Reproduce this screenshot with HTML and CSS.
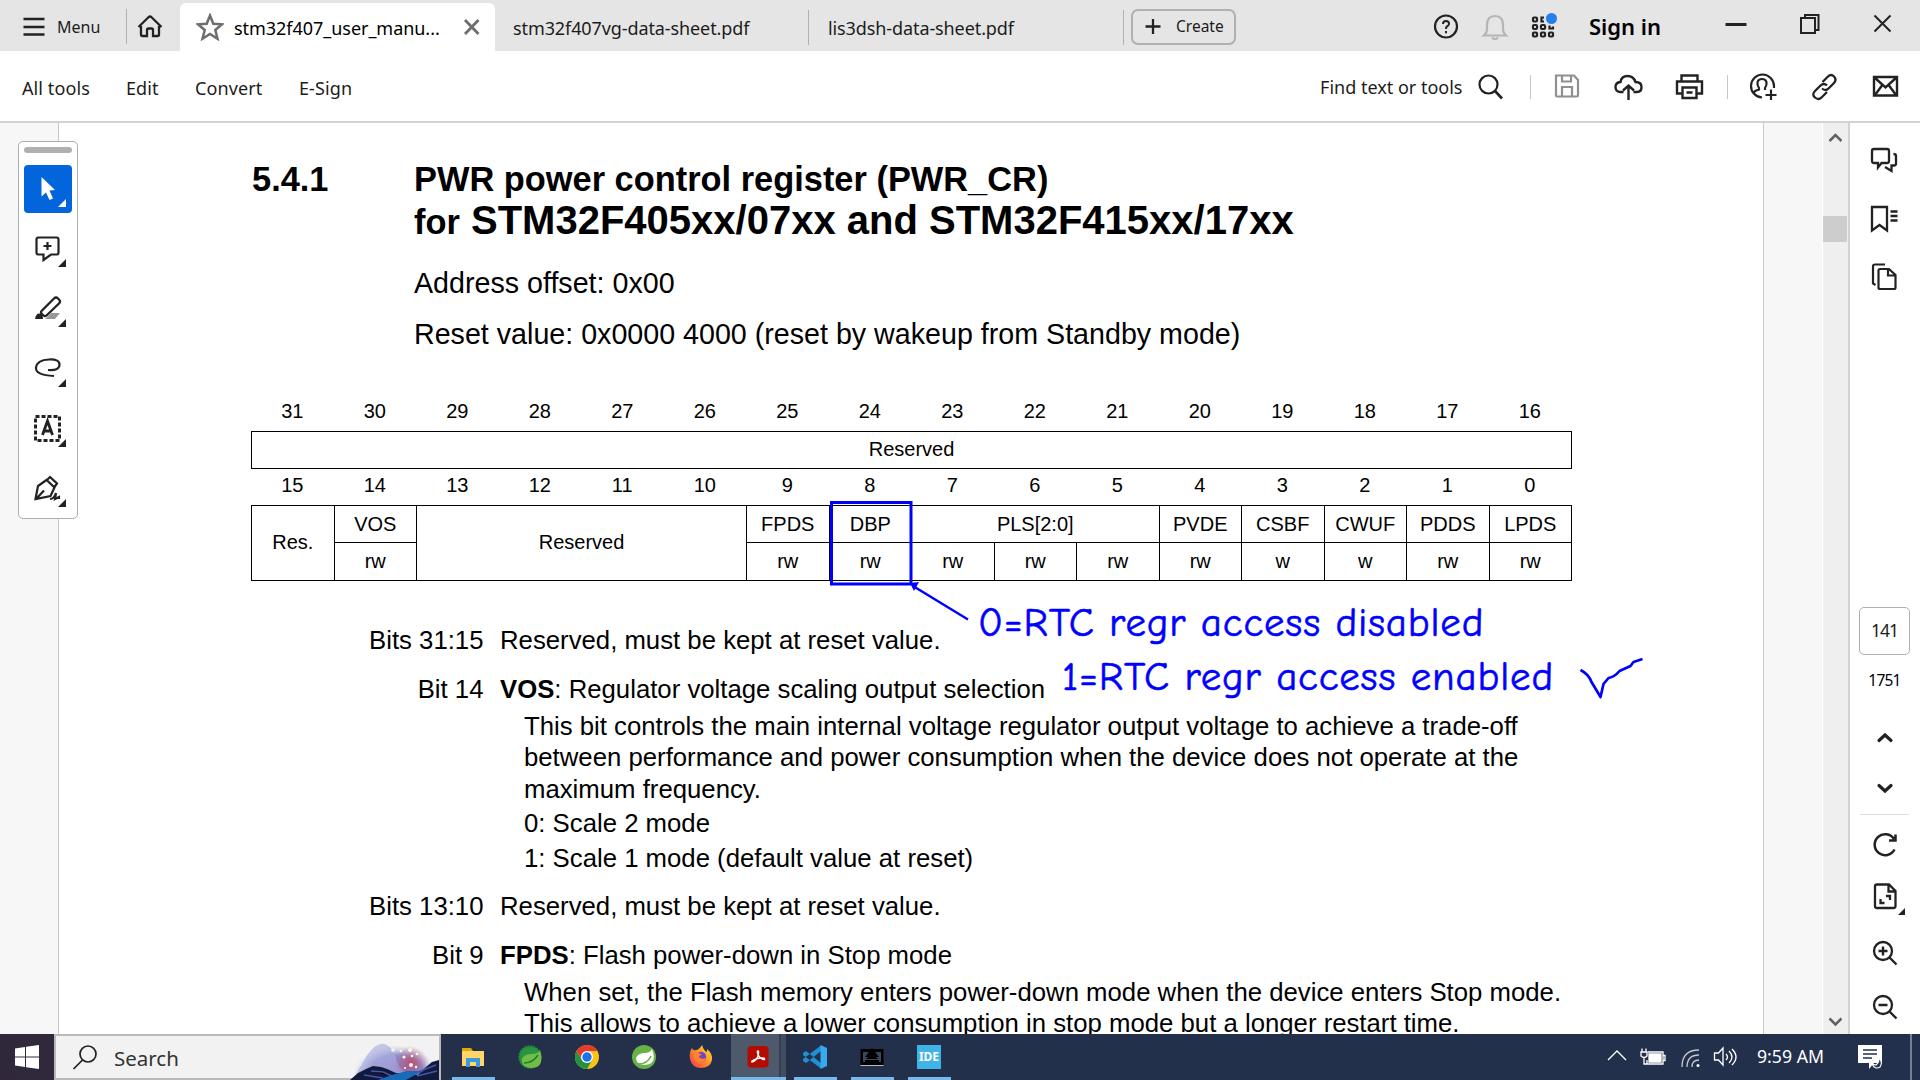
FILE: index.html
```html
<!DOCTYPE html>
<html lang="en">
<head>
<meta charset="utf-8">
<title>stm32f407_user_manual.pdf</title>
<link rel="stylesheet" href="styles.css">
</head>
<body>
<div class="screen">
  <header class="tabbar">
    <div class="menu">
      <svg width="24" height="20" viewBox="0 0 24 20" class="ico"><path d="M1.5 2h21M1.500 10h21M1.500 17.500h21" stroke-width="2.400"/></svg>
      <span>Menu</span>
    </div>
    <div class="home">
      <svg width="26" height="24" viewBox="0 0 26 24" class="ico"><path d="M4 11v8.500q0 1.500 1.500 1.500H10v-6q0-1.500 1.500-1.500h3q1.500 0 1.500 1.500V21h4.500q1.500 0 1.500-1.500V11M1.500 12 11.700 2q1.300-1 2.600 0L24.500 12" stroke-width="2.300"/></svg>
    </div>
    <div class="tab active">
      <svg width="28" height="28" viewBox="0 0 28 28" class="ico gray"><path d="m14 2.500 3.300 8.200 8.700.600-6.700 5.700 2.200 8.700-7.500-4.800-7.500 4.800 2.200-8.700L2 11.300l8.700-.6z" stroke-width="2.500"/></svg>
      <span class="name">stm32f407_user_manu...</span>
      <svg width="18" height="18" viewBox="0 0 18 18" class="ico gray close"><path d="m2 1 13.500 14M15.500 1 2 15" stroke-width="2.800"/></svg>
    </div>
    <div class="tab"><span>stm32f407vg-data-sheet.pdf</span></div>
    <div class="tab last"><span>lis3dsh-data-sheet.pdf</span></div>
    <div class="create">
      <svg width="16" height="16" viewBox="0 0 16 16" class="ico"><path d="M8 0v15M.5 7.500h15" stroke-width="2.300"/></svg>
      <span>Create</span>
    </div>
    <div class="account">
      <svg width="28" height="28" viewBox="0 0 28 28" class="ico"><circle cx="14" cy="13.500" r="11" stroke-width="2.200"/><path d="M11 11q0-3 3-3t3 2.700q0 1.500-1.600 2.500T14 16M14 18v2.200"/></svg>
      <svg width="28" height="28" viewBox="0 0 28 28" class="ico light"><path d="M3 22.500q3-2.500 3-6.500v-4q0-9 8-9t8 9v4q0 4 3 6.500zM11 24.500q3 3.500 6 0" stroke-width="2.200"/></svg>
      <svg width="28" height="28" viewBox="0 0 28 28" class="ico"><g stroke-width="2.200"><rect x="3" y="4.500" width="4" height="4" rx="1"/><path d="M14 4.500h-2.500v4H14"/><rect x="3" y="12" width="4" height="4" rx="1"/><rect x="11" y="12" width="4" height="4" rx="1"/><path d="M19.500 12.500v3H23v-2"/><rect x="3" y="19.500" width="4" height="4" rx="1"/><rect x="11" y="19.500" width="4" height="4" rx="1"/><rect x="19" y="19.500" width="4" height="4" rx="1"/></g><circle cx="21.500" cy="5.500" r="5.500" fill="#2680eb" stroke="none"/></svg>
      <span>Sign in</span>
    </div>
    <div class="window-controls">
      <svg width="22" height="22" viewBox="0 0 22 22" class="ico"><path d="M.5 11.500h21" stroke-width="3"/></svg>
      <svg width="20" height="22" viewBox="0 0 20 22" class="ico"><rect x="1" y="5" width="14" height="15"/><path d="M5 5V2h13.500v15H15"/></svg>
      <svg width="20" height="22" viewBox="0 0 20 22" class="ico"><path d="m1.500 2.500 16 16M17.500 2.500l-16 16"/></svg>
    </div>
  </header>

  <nav class="toolbar">
    <div class="links"><span class="l1">All tools</span><span class="l2">Edit</span><span class="l3">Convert</span><span class="l4">E-Sign</span></div>
    <div class="actions">
      <span class="find">Find text or tools</span>
      <svg width="30" height="30" viewBox="0 0 30 30" class="ico"><circle cx="13.500" cy="12.500" r="9" stroke-width="2.200"/><path d="m20 19 7 7.500" stroke-width="2.600"/></svg>
      <i class="sep"></i>
      <svg width="30" height="30" viewBox="0 0 30 30" class="ico mute"><path d="M4 3.500h18l4 4.500v15.500q0 1-1 1H5q-1 0-1-1zM10 3.500v6h9v-6M10 24v-9h10v9" stroke-width="2.200"/></svg>
      <svg width="30" height="30" viewBox="0 0 30 30" class="ico"><path d="M10.500 20H7Q2.500 19.500 2.500 15t5-5q1-6 7-6t8 6q6 0 6 5t-4.500 5H20.500M15.500 28V14m-5.500 4.500 5.500-5 5.500 5" stroke-width="2.400"/></svg>
      <svg width="30" height="30" viewBox="0 0 30 30" class="ico"><path d="M7.500 9V3.500h16V9M7.500 21.500H3V9.500h25v12H23.500M8.500 15.500h14v10.500H8.500zM12.500 20.500h6" stroke-width="2.400"/></svg>
      <i class="sep sep2"></i>
      <svg width="30" height="30" viewBox="0 0 30 30" class="ico"><path d="M13 25.500A11.500 11.500 0 1 1 25 14v2M4.500 21q1-2.500 5.500-3.500v-1.500Q8 13 8.500 10q1-3 4.500-3t4.500 3Q18 13 16 16v2M22 17.500V28M16.500 23h11" stroke-width="2.200"/></svg>
      <svg width="30" height="30" viewBox="0 0 30 30" class="ico"><path d="m12.500 10 5.500-5.500q3-3 6 0t0 6.500L18.500 16.500q-3 3-6.500 0M17 20l-5.500 5.500q-3 3-6.500 0t0-6.500L10.500 13.500q3.500-3 6.500 0" stroke-width="2.300"/></svg>
      <svg width="30" height="30" viewBox="0 0 30 30" class="ico"><path d="M3 5h23v18.500H3zM3.500 5.500l11 10 11-10M4 23l7-9.500M25 23l-7-9.500" stroke-width="2.400"/></svg>
    </div>
  </nav>

  <main class="workspace">
    <div class="gutter"></div>
    <article class="page">
      <section class="heading">
        <span class="number">5.4.1</span>
        <div class="title">
          <h1>PWR power control register (PWR_CR)</h1>
          <h2><small>for</small> STM32F405xx/07xx and STM32F415xx/17xx</h2>
          <p class="address">Address offset: 0x00</p>
          <p class="reset">Reset value: 0x0000 4000 (reset by wakeup from Standby mode)</p>
        </div>
      </section>

      <section class="register">
        <div class="bits"><b>31</b><b>30</b><b>29</b><b>28</b><b>27</b><b>26</b><b>25</b><b>24</b><b>23</b><b>22</b><b>21</b><b>20</b><b>19</b><b>18</b><b>17</b><b>16</b></div>
        <div class="high">Reserved</div>
        <div class="bits"><b>15</b><b>14</b><b>13</b><b>12</b><b>11</b><b>10</b><b>9</b><b>8</b><b>7</b><b>6</b><b>5</b><b>4</b><b>3</b><b>2</b><b>1</b><b>0</b></div>
        <div class="fields">
          <div class="tall">Res.</div><div>VOS</div><div class="tall wide4">Reserved</div><div>FPDS</div><div>DBP</div><div class="wide3">PLS[2:0]</div><div>PVDE</div><div>CSBF</div><div>CWUF</div><div>PDDS</div><div>LPDS</div>
          <div>rw</div><div>rw</div><div>rw</div><div>rw</div><div>rw</div><div>rw</div><div>rw</div><div>w</div><div>w</div><div>rw</div><div>rw</div>
        </div>
      </section>

      <section class="description">
        <div class="entry"><span class="label">Bits 31:15</span><p>Reserved, must be kept at reset value.</p></div>
        <div class="entry e14"><span class="label">Bit 14</span>
          <div><p><b>VOS</b>: Regulator voltage scaling output selection</p>
            <div class="details"><p>This bit controls the main internal voltage regulator output voltage to achieve a trade-off<br>between performance and power consumption when the device does not operate at the<br>maximum frequency.</p><p class="scale2">0: Scale 2 mode</p><p class="scale1">1: Scale 1 mode (default value at reset)</p></div>
          </div>
        </div>
        <div class="entry e13"><span class="label">Bits 13:10</span><p>Reserved, must be kept at reset value.</p></div>
        <div class="entry e9"><span class="label">Bit 9</span>
          <div><p><b>FPDS</b>: Flash power-down in Stop mode</p>
            <div class="details"><p>When set, the Flash memory enters power-down mode when the device enters Stop mode.<br>This allows to achieve a lower consumption in stop mode but a longer restart time.</p></div>
          </div>
        </div>
      </section>

      <div class="note note0">0=RTC regr access disabled</div>
      <div class="note note1">1=RTC regr access enabled</div>
      <svg class="ink" width="840" height="220" viewBox="820 490 840 220"><g fill="none" stroke="#00f"><rect x="831.500" y="502.500" width="79.500" height="81.500" stroke-width="3"/><path d="m913 586 55 33.500" stroke-width="2.500"/><path d="M1580.500 670q8 4 11 12l9 15 3-13 5-6q6-1 11-7l11-5 3-4 9-3" stroke-width="2.700" stroke-linejoin="round"/></g><path d="m910 583 9-1-5 9z" fill="#00f"/></svg>
    </article>
    <div class="gutter right"></div>

    <div class="scrollbar">
      <svg width="14" height="12" viewBox="0 0 14 12"><path d="m1.500 9 6-6 6 6" fill="none" stroke="#606060" stroke-width="2.500"/></svg>
      <div class="thumb"></div>
      <svg class="down" width="14" height="12" viewBox="0 0 14 12"><path d="m1.500 2.500 6 6 6-6" fill="none" stroke="#606060" stroke-width="2.500"/></svg>
    </div>

    <aside class="rail">
      <svg width="30" height="30" viewBox="0 0 30 30" class="ico"><path d="M4 4h13q2 0 2 2v10q0 2-2 2h-5.500L8 22.500V18H4q-2 0-2-2V6q0-2 2-2zM23.500 9q2.500 0 2.500 2v7.500q0 2-2 2h-2.500V26L15 22" stroke-width="2.300"/></svg>
      <svg width="30" height="30" viewBox="0 0 30 30" class="ico"><path d="M2 4h15v23.500L9.500 22 2 27.500zM20.500 8.500h7M20.500 13h7M20.500 17.500h7" stroke-width="2.300"/></svg>
      <svg width="30" height="30" viewBox="0 0 30 30" class="ico"><path d="M15 3.500H5q-2 0-2 2v17l2.500 1.500M10 8h9l6.500 6v12.500q0 1.500-1.500 1.500H10q-1.500 0-1.500-1.500V9.500Q8.500 8 10 8zM18 8v6.500h7" stroke-width="2.200"/></svg>
      <div class="pageno">141</div>
      <div class="total">1751</div>
      <svg width="30" height="30" viewBox="0 0 30 30" class="ico up"><path d="m9 18.500 6-5.500 6 5.500" stroke-width="3.200" stroke-linecap="round"/></svg>
      <svg width="30" height="30" viewBox="0 0 30 30" class="ico dn"><path d="m9 12.500 6 5.500 6-5.500" stroke-width="3.200" stroke-linecap="round"/></svg>
      <hr>
      <svg width="30" height="30" viewBox="0 0 30 30" class="ico"><path d="M24.500 19.500A10.500 10.500 0 1 1 24 9M25.500 4.500v6h-6.500" stroke-width="2.500"/></svg>
      <svg width="40" height="34" viewBox="-5 0 40 34" class="ico pagefit"><path d="M7 3.500h12L25.500 10v15q0 2-2 2H7q-2 0-2-2v-19.500q0-2 2-2zM18.500 4v6.500H25M16 15h4v4M10.500 18v4h4" stroke-width="2.300"/><path d="M35 27v7h-7z" fill="#222" stroke="none"/></svg>
      <svg width="30" height="30" viewBox="0 0 30 30" class="ico zin"><circle cx="13" cy="12" r="9" stroke-width="2.300"/><path d="m19.500 18.500 7 7M13 7.500v9M8.500 12h9" stroke-width="2.400"/></svg>
      <svg width="30" height="30" viewBox="0 0 30 30" class="ico zout"><circle cx="13" cy="12" r="9" stroke-width="2.300"/><path d="m19.500 18.500 7 7M8.500 12h9" stroke-width="2.400"/></svg>
    </aside>

    <div class="tools">
      <i class="handle"></i>
      <div class="tool on"><svg width="48" height="48" viewBox="0 0 48 48"><path d="M17.500 12v19.500l4.500-4L25.500 35l3.500-1.500-3.500-8 5.500-.5z" fill="#fff"/><path d="M42 34v8h-8z" fill="#fff"/></svg></div>
      <div class="tool"><svg width="48" height="48" viewBox="0 0 48 48" class="ico"><path d="M14.500 12.500h18q2 0 2 2v13q0 2-2 2h-5.500L19.500 35v-5.500h-5q-2 0-2-2v-13q0-2 2-2zM23.500 17v8M19.500 21h8" stroke-width="2.200"/><path d="M42 34v8h-8z" fill="#222" stroke="none"/></svg></div>
      <div class="tool"><svg width="48" height="48" viewBox="0 0 48 48" class="ico"><path d="m18 25.500 12-12q2-2 4 0l1 1q2 2 0 4L23 30q-2 2-3.500.500l-1.500-1.500q-2-1.500 0-3.500z" stroke-width="2.300"/><path d="M15 28.500q4 0 4 5.500h-8q1-5.500 4-5.500z" fill="#222" stroke="none"/><path d="M27 28h9l-5 6H21z" fill="#999" stroke="none"/><path d="M42 34v8h-8z" fill="#222" stroke="none"/></svg></div>
      <div class="tool"><svg width="48" height="48" viewBox="0 0 48 48" class="ico"><path d="M24 25q11 1 11.500-5T25 14.500Q13 15 12 22.500T30 31" stroke-width="2.200"/><path d="M42 34v8h-8z" fill="#222" stroke="none"/></svg></div>
      <div class="tool"><svg width="48" height="48" viewBox="0 0 48 48" class="ico"><rect x="11.500" y="11.500" width="24" height="24" stroke-width="3" stroke-dasharray="4 2"/><path d="m18.500 30 5-14 5 14M20 26h7.500" stroke-width="2.800"/><path d="M42 34v8h-8z" fill="#222" stroke="none"/></svg></div>
      <div class="tool"><svg width="48" height="48" viewBox="0 0 48 48" class="ico"><path d="m11.500 34 2.500-13 8.500-6 8 7.500L26.500 31zM23.500 14.500l2.500-2.500 7 6.500-2.500 3.500M13 33l7-7.500M26 34q4 0 6-6l-1 6 4-2v2" stroke-width="2.200"/><path d="M42 34v8h-8z" fill="#222" stroke="none"/></svg></div>
    </div>
  </main>

  <footer class="taskbar">
    <svg class="start" width="24" height="24" viewBox="0 0 24 24"><path d="M0 3.500 10 2v9.500H0zM11 1.800 24 0v11.500H11zM0 12.500h10V22L0 20.500zM11 12.500h13V24l-13-1.800z" fill="#fff"/></svg>
    <div class="search">
      <svg width="26" height="26" viewBox="0 0 26 26" class="ico"><circle cx="16" cy="9" r="8"/><path d="M10.500 15 1.500 24"/></svg>
      <span>Search</span>
      <svg class="art" width="89" height="44" viewBox="0 0 89 44">
        <defs><radialGradient id="sky" cx=".5" cy=".65" r=".5"><stop offset="0" stop-color="#7564b3"/><stop offset=".7" stop-color="#9295cf"/><stop offset="1" stop-color="#c9cbe8" stop-opacity="0"/></radialGradient><radialGradient id="glow"><stop offset="0" stop-color="#bd4f6c"/><stop offset="1" stop-color="#a65b91" stop-opacity="0"/></radialGradient></defs>
        <ellipse cx="46" cy="32" rx="43" ry="33" fill="url(#sky)"/><path d="M18 18Q34-3 45 19q3 15 14 19H6z" fill="#aaaee0" opacity=".65"/><circle cx="61" cy="27" r="17" fill="url(#glow)"/>
        <path d="M0 44 8 37l8-4 7-3 8 1 6 2 9 4 22 2 8-8 6-5 7-2v22z" fill="#111a3d"/><path d="m28 44 14-5 15-4 17 0-9 4-9 5z" fill="#176cb5"/><path d="m21 35 12 1 9 4M68 36l18-7M67 40l20-5M14 39l19 3" stroke="#4556a8" stroke-width="1.500"/>
        <g fill="#fff5df"><circle cx="45" cy="5" r="1"/><circle cx="51" cy="9" r="1.300"/><circle cx="43" cy="14" r="1.800"/><circle cx="51" cy="15" r="1.300"/><circle cx="60" cy="14" r="2"/><circle cx="67" cy="18" r="1.300"/><circle cx="54" cy="21" r="1.600"/><circle cx="62" cy="20" r="1.300"/><circle cx="61" cy="29" r="2"/><circle cx="66" cy="31" r="1.200"/><circle cx="55" cy="32" r="1"/></g>
      </svg>
    </div>
    <div class="apps">
      <div class="app open"><svg width="24" height="24" viewBox="0 0 24 24"><path d="M1 3h9l2 3h11v15H1z" fill="#e5a50a"/><path d="M1 6h22v15H1z" fill="#ffd667"/><path d="M5 13h14v9h-4v-5H9v5H5z" fill="#3a99e0"/></svg></div>
      <div class="app"><svg width="24" height="24" viewBox="0 0 24 24"><ellipse cx="12" cy="12" rx="10.800" ry="10.800" fill="#2b9444" stroke="#24863b" stroke-width="2" stroke-dasharray="2 1"/><path d="M22 5q5 18-8 18Q3 23 4 14q2-5 10-5 6 0 8-4z" fill="#71bd45"/><path d="M6 18q9 0 14-8" stroke="#237b39" stroke-width="1.500" fill="none"/></svg></div>
      <div class="app"><svg width="24" height="24" viewBox="0 0 24 24"><circle cx="12" cy="12" r="12" fill="#fbc116"/><path d="M1.600 6A12 12 0 0 1 22.400 6H12L7 15z" fill="#e33b2e"/><path d="M1.600 6A12 12 0 0 0 12 24l5.200-9-5.200 3-5.200-3z" fill="#229342"/><circle cx="12" cy="12" r="6" fill="#fff"/><circle cx="12" cy="12" r="4.700" fill="#1a73e8"/></svg></div>
      <div class="app"><svg width="24" height="24" viewBox="0 0 24 24"><circle cx="12" cy="12" r="12" fill="#68b144"/><path d="M20 4q6 15-7 16-9 0-9-7 2-5 9-5 5 0 7-4z" fill="#fff"/><path d="M4 19q11 1 15-8" stroke="#68b144" stroke-width="1.500" fill="none"/></svg></div>
      <div class="app"><svg width="24" height="24" viewBox="0 0 24 24"><defs><linearGradient id="fox" x1="1" y1="0" x2="0" y2="1"><stop stop-color="#ffe548"/><stop offset=".45" stop-color="#ff9828"/><stop offset="1" stop-color="#ed3152"/></linearGradient></defs><path d="M3 3q1 3 4 2 3 0 6-5 2 6 5 7V4q6 5 5 11-2 8-11 8T1 14Q0 7 3 3z" fill="url(#fox)"/><circle cx="12" cy="12" r="5.200" fill="#7542c8"/><path d="M4 9q5-3 9 1-3 0-3 2 2 3 7 1-2 6-8 4-5-2-5-8z" fill="#ff822d"/></svg></div>
      <div class="app current"><svg width="24" height="24" viewBox="0 0 24 24"><rect x="1.500" y="1" width="21" height="21.500" rx="3.500" fill="#b30b00"/><path d="M6 17q5-1 6.500-8 .5-4-1-3-1 2 2 6 3 3 5 2.500 1-2-4-1.500-5 .5-8 2.500-1.500 1.500-.5 1.500z" fill="none" stroke="#fff" stroke-width="1.300"/></svg></div>
      <div class="app open"><svg width="24" height="24" viewBox="0 0 24 24"><path d="M0 8l3-2 15 12v5.500L0 10zM0 16l3 2L18 6V.5L0 14z" fill="#1f8fd6"/><path d="m17.500 0 6.500 3v18l-6.500 3z" fill="#35acef"/></svg></div>
      <div class="app open"><svg width="24" height="24" viewBox="0 0 24 24"><path d="M.5 4h23v16H.5z" fill="#000"/><path d="M3 7h18v10H3z" fill="#3b475c"/><path d="m12 3 7 9h-3l2 2H6l2-2H5zM5 15h14v2H5z" fill="#000"/><path d="M.5 20.500h23" stroke="#bbb"/></svg></div>
      <div class="app open"><div class="ide">IDE</div></div>
    </div>
    <div class="tray">
      <svg width="20" height="20" viewBox="0 0 20 20" class="wico"><path d="m1 15 9-9 9 9"/></svg>
      <svg width="26" height="24" viewBox="0 0 26 24" class="wico battery"><path d="M8 7h15v12H7v-4M23.500 10.500H25v5h-1.500M2 3.500V7M6 3.500V7M1 7h6v4q-3 3-6 0zM4 12v7h3"/><path d="M9 9h12v8H9z" fill="#fff"/></svg>
      <svg width="22" height="22" viewBox="0 0 22 22" class="wico wifi"><path d="M2 20Q2 3 19 3M7 20Q7 8 19 8M12 20q0-7 7-7" stroke="#c5c9d1"/><circle cx="18" cy="18.500" r="1.500" fill="#fff" stroke="none"/></svg>
      <svg width="24" height="22" viewBox="0 0 24 22" class="wico sound"><path d="M1.500 7h4L10 2v17l-4.500-5h-4zM13 8q3 3 0 6M16 5q6 6 0 12M19 3q8 8 0 16"/></svg>
      <span>9:59 AM</span>
      <svg width="25" height="25" viewBox="0 0 25 25" class="action"><path d="M0 0h24v18h-8l-5 6v-6H0z" fill="#fff"/><path d="M5 5h14M5 9h14M5 13h9" stroke="#22304a" stroke-width="1.500"/><path d="M19 12q4 4-1 8l-4-1q3 6 8 3 4-6-3-10z" fill="#22304a" stroke="#fff" stroke-width="1.200"/></svg>
    </div>
  </footer>
</div>
</body>
</html>
```
FILE: styles.css
```css
* { box-sizing: border-box; }
body { margin: 0; background: #fff; color: #1c1c1c; font-family: "Noto Sans", "Open Sans", sans-serif; }
p, h1, h2 { margin: 0; }
svg { display: block; flex: none; }
.screen { width: 1920px; height: 1080px; display: flex; flex-direction: column; overflow: hidden; }
.ico { fill: none; stroke: #222; stroke-width: 2; }
.ico.gray { stroke: #6e6e6e; }
.ico.light { stroke: #b5b5b5; }
.ico.mute { stroke: #909090; }
span, .note { white-space: nowrap; }

/* Tab strip */
.tabbar { height: 51px; flex: none; display: flex; align-items: flex-start; background: #e5e5e5; font-size: 18px; line-height: 24px; }
.menu { width: 127px; height: 35px; margin-top: 9px; padding-left: 22px; display: flex; align-items: center; gap: 11px; border-right: 1px solid #b1b1b1; font-size: 16px; }
.home { width: 53px; padding: 15px 0 0 10px; }
.tab { width: 315px; height: 35px; margin-top: 10px; padding: 6px 0 0 18px; border-right: 1px solid #b1b1b1; }
.tab span { letter-spacing: -.1px; }
.tab:nth-child(4) { width: 314px; }
.tab.last { width: 315px; padding-left: 19px; }
.tab.active { display: flex; height: 48px; margin-top: 3px; padding: 10px 0 0 16px; background: #fff; border: 0; border-radius: 6px 6px 0 0; color: #000; }
.tab.active .name { margin: 3px 0 0 10px; width: 229px; letter-spacing: -.04px; }
.tab.active .close { margin-top: 6px; }
.create { width: 105px; height: 36px; margin: 9px 0 0 7px; padding-left: 12px; display: flex; align-items: center; gap: 15px; border: 2px solid #b0b0b0; border-radius: 7px; font-size: 15.500px; }
.create span { margin-top: -2px; }
.account { display: flex; align-items: center; gap: 21px; margin-left: 196px; height: 54px; font-size: 22px; font-weight: 600; color: #000; }
.account span { margin: -2px 0 0 10px; font-size: 22px; letter-spacing: 0; }
.window-controls { display: flex; align-items: center; gap: 53px; height: 48px; margin: 0 27px 0 auto; }

/* Tool row */
.toolbar { height: 72px; flex: none; display: flex; justify-content: space-between; border-bottom: 2px solid #d3d3d3; font-size: 18px; line-height: 24px; }
.links { display: flex; padding: 25px 0 0 22px; }
.links span { letter-spacing: .1px; }
.links .l1 { width: 104px; }
.links .l2 { width: 69px; }
.links .l3 { width: 104px; }
.actions { display: flex; height: 71px; align-items: center; gap: 31px; padding-right: 19.500px; }
.find { margin-right: -19px; }
.sep { width: 1px; height: 24px; margin: 0 -10px 0 -6px; background: #c6c6c6; }
.sep2 { margin-left: -8px; }

/* Document */
.workspace { position: relative; height: 911px; flex: none; display: flex; overflow: hidden; background: #fff; }
.gutter { width: 59px; flex: none; background: #f7f7f7; border-right: 1px solid #c8c8c8; }
.gutter.right { border: 0; border-left: 1px solid #c8c8c8; width: 60px; border-right: 1px solid #fff; }
.page { position: relative; width: 1704px; flex: none; padding-top: 36px; color: #000; font-family: "Liberation Sans", Arial, sans-serif; }
.heading { display: flex; padding-left: 193px; font-weight: 700; font-size: 34.400px; line-height: 40px; }
.heading .number { width: 162px; }
.heading h1 { font-size: 34.400px; line-height: 40px; }
.heading h2 { font-size: 40px; line-height: 42px; height: 42px; }
.heading small { font-size: 34.400px; }
.heading p { font-weight: 400; font-size: 28.650px; line-height: 34px; white-space: nowrap; }
.address { margin-top: 25px; }
.reset { margin-top: 16.700px; }
.register { width: 1321px; margin: 43px 0 0 192px; font-size: 20px; text-align: center; line-height: 37px; }
.bits { display: grid; grid-template-columns: repeat(16, 82.500px); height: 37px; line-height: 35px; }
.bits b { font-weight: 400; }
.high { height: 38px; margin-bottom: -1px; border: 1px solid #000; line-height: 35px; }
.fields { display: grid; grid-template-columns: repeat(16, 82.500px); grid-template-rows: 37px 38px; width: 1321px; border-left: 1px solid #000; border-bottom: 1px solid #000; }
.fields div { border-top: 1px solid #000; border-right: 1px solid #000; line-height: 37px; }
.fields .tall { grid-row: span 2; line-height: 72px; }
.fields .wide4 { grid-column: span 4; }
.fields .wide3 { grid-column: span 3; }
.description { width: 1600px; margin-top: 44px; padding-left: 291px; font-size: 25.740px; line-height: 31.500px; }
.entry { display: grid; grid-template-columns: 133.500px 1fr; column-gap: 16.500px; }
.label { text-align: right; }
.e14, .e9 { margin-top: 17.500px; }
.e13 { margin-top: 16px; }
.details { padding: 5.500px 0 0 24px; white-space: nowrap; }
.scale2 { margin-top: 2.700px; }
.scale1 { margin-top: 3.800px; }

/* Reader annotations laid over the page */
.note { position: absolute; color: #00f; font-family: "Comic Sans MS", "Comic Neue", "Noto Sans", sans-serif; font-size: 41px; line-height: 54px; letter-spacing: .8px; -webkit-text-stroke: .6px #00f; }
.note0 { left: 919px; top: 473px; }
.note1 { left: 1003px; top: 527px; }
.ink { position: absolute; left: 761px; top: 367px; }

.scrollbar { width: 27px; flex: none; display: flex; flex-direction: column; padding: 9px 0 6px; background: #efefef; border-right: 2px solid #d3d3d3; }
.scrollbar svg { margin-left: 5px; }
.scrollbar .down { margin-top: auto; }
.thumb { width: 24px; height: 26px; margin-top: 72px; background: #cdcdcd; }

.rail { flex: 1; display: flex; flex-direction: column; align-items: center; padding: 22px 1px 0 0; }
.rail > svg { margin-bottom: 28px; }
.pageno { width: 51px; height: 48px; margin-top: 288px; border: 1px solid #b0b0b0; border-radius: 5px; text-align: center; font-size: 17.500px; line-height: 45px; letter-spacing: -1px; }
.total { margin-top: 13px; font-size: 15.500px; line-height: 24px; letter-spacing: -.8px; color: #000; }
.rail .up { margin: 30px 0 21px; }
.rail .dn { margin: 0; }
.rail hr { width: 49px; height: 1px; margin: 11px 0 15px; border: 0; background: #dcdcdc; }
.rail .pagefit { margin: -7px 0 27px; overflow: visible; }
.rail .zin { margin: -3px 0 24px; }
.rail .zout { margin: 0; }

.tools { position: absolute; left: 18px; top: 18px; width: 60px; height: 378px; padding: 5px 5px 0; border: 1.500px solid #adadad; border-radius: 5px; background: #fff; display: flex; flex-direction: column; gap: 12px; }
.handle { flex: none; height: 6px; border-radius: 3px; background: #b0b0b0; }
.tool { width: 48px; height: 48px; flex: none; }
.on { background: #0265dc; border-radius: 4px; }

/* Desktop taskbar */
.taskbar { height: 46px; flex: none; display: flex; align-items: stretch; background: linear-gradient(90deg, #30283a 0, #30293c 54px, #24304a 440px, #22304c 100%); color: #fff; }
.start { margin: 11px 15px 0; }
.search { position: relative; width: 387px; display: flex; padding: 9px 0 0 16px; background: #f2f2f2; border: 2px solid #bababa; color: #333; }
.search span { margin: -1px 0 0 16px; font-size: 20.500px; line-height: 29px; }
.search .ico { stroke-width: 1.700; }
.search .art { margin: -9px 0 0 auto; }
.apps { display: flex; padding-left: 4px; }
.app { width: 57px; padding: 11px 0 0 16px; position: relative; }
.open::after { content: ""; position: absolute; left: 7px; bottom: 0; width: 43px; height: 3px; background: #76b9ed; }
.current { width: 55px; margin: 0 1px; background: linear-gradient(90deg, #4f596c 0 48px, #353f53 48px 50px, #434d61 50px); border-bottom: 3px solid #76b9ed; }
.current svg { margin-left: -1px; }
.ide { width: 24px; height: 24px; background: #3fb4e8; font: 700 12px/23px "Noto Sans", sans-serif; text-align: center; }
.tray { display: flex; margin-left: auto; padding-top: 11px; width: 313px; }
.wico { fill: none; stroke: #fff; stroke-width: 1.300; }
.tray .battery { margin: 0 0 0 13px; }
.tray .wifi { margin: 2px 0 0 14px; }
.tray .sound { margin: 1px 0 0 11px; }
.tray span { width: 99px; margin: -1px 0 0 20px; font-size: 17.700px; line-height: 24px; }
.tray .action { flex: none; margin-left: 2px; }
.tray::after { content: ""; width: 2px; height: 46px; margin: -11px 0 0 27px; background: #768092; }
```
